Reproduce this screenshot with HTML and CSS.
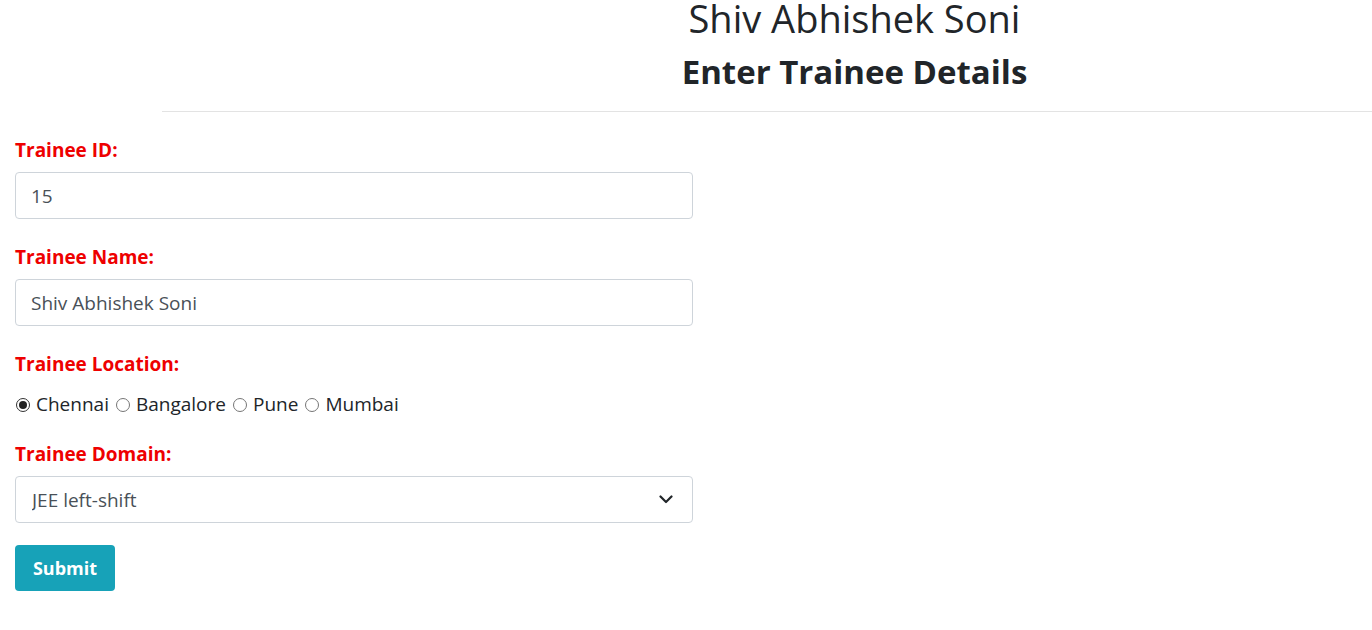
FILE: index.html
```html
<!DOCTYPE html>
<html lang="en">
<head>
<meta charset="utf-8">
<title>Trainee Details</title>
<link rel="stylesheet" href="styles.css">
</head>
<body>
<header class="header">
  <h1 class="name">Shiv Abhishek Soni</h1>
  <h2 class="subtitle">Enter Trainee Details</h2>
</header>
<form class="form">
  <div class="group">
    <label class="label" for="tid">Trainee ID:</label>
    <input class="control" id="tid" type="text" value="15">
  </div>
  <div class="group">
    <label class="label" for="tname">Trainee Name:</label>
    <input class="control" id="tname" type="text" value="Shiv Abhishek Soni">
  </div>
  <div class="group">
    <div class="label">Trainee Location:</div>
    <div class="radios">
      <label class="radio"><input type="radio" name="loc" checked><span>Chennai</span></label>
      <label class="radio"><input type="radio" name="loc"><span>Bangalore</span></label>
      <label class="radio"><input type="radio" name="loc"><span>Pune</span></label>
      <label class="radio"><input type="radio" name="loc"><span>Mumbai</span></label>
    </div>
  </div>
  <div class="group">
    <label class="label" for="tdomain">Trainee Domain:</label>
    <div class="select-wrap">
      <select class="control select" id="tdomain">
        <option>JEE left-shift</option>
      </select>
      <svg class="chevron" width="14" height="10" viewBox="0 0 14 10"><path d="M1.5 2.5 L7 8 L12.5 2.5" fill="none" stroke="#212529" stroke-width="2.2" stroke-linecap="round" stroke-linejoin="round"/></svg>
    </div>
  </div>
  <button class="btn" type="button">Submit</button>
</form>
</body>
</html>
```
FILE: styles.css
```css
html, body {
  margin: 0;
  padding: 0;
  background: #fff;
}
body {
  font-family: "Open Sans", "Noto Sans", "Liberation Sans", sans-serif;
  color: #212529;
  font-size: 19px;
}
.header {
  margin-left: 162px;
  padding-left: 175px;
  text-align: center;
  border-bottom: 1px solid #e3e3e3;
  padding-bottom: 17px;
}
.name {
  margin: 0;
  font-weight: 400;
  font-size: 38px;
  line-height: 37px;
}
.subtitle {
  margin: 13px 0 0;
  font-weight: 700;
  font-size: 33px;
  line-height: 44px;
}
.form {
  padding: 25px 15px 0;
  width: 678px;
}
.group {
  margin-bottom: 25px;
}
.label {
  display: block;
  color: #ee0000;
  font-weight: 700;
  font-size: 19px;
  line-height: 27px;
  margin-bottom: 8px;
}
.control {
  display: block;
  box-sizing: border-box;
  width: 678px;
  height: 47px;
  padding: 0 15px;
  font-family: inherit;
  font-size: 19px;
  color: #495057;
  background: #fff;
  border: 1px solid #ced4da;
  border-radius: 4px;
  outline: none;
}
.select-wrap {
  position: relative;
  width: 678px;
}
.select {
  appearance: none;
  -webkit-appearance: none;
  padding-left: 16px;
}
.chevron {
  position: absolute;
  right: 20px;
  top: 18px;
  pointer-events: none;
}
.radios {
  display: flex;
  align-items: center;
  gap: 6px;
  line-height: 27px;
  padding-top: 5px;
  margin-bottom: -2px;
}
.radio {
  display: flex;
  align-items: center;
  gap: 6px;
  font-size: 19px;
  color: #212529;
}
.radio input {
  appearance: none;
  -webkit-appearance: none;
  margin: 0 0 0 1px;
  width: 14px;
  height: 14px;
  border: 1px solid #767676;
  border-radius: 50%;
  background: #fff;
  display: grid;
  place-items: center;
  box-sizing: border-box;
}
.radio input:checked {
  border-color: #333;
}
.radio input:checked::before {
  content: "";
  width: 8px;
  height: 8px;
  border-radius: 50%;
  background: #222;
}
.btn {
  display: block;
  width: 100px;
  height: 46px;
  margin-top: -3px;
  border: none;
  border-radius: 4px;
  background: #17a2b8;
  color: #fff;
  font-family: inherit;
  font-size: 18px;
  font-weight: 700;
}
```
